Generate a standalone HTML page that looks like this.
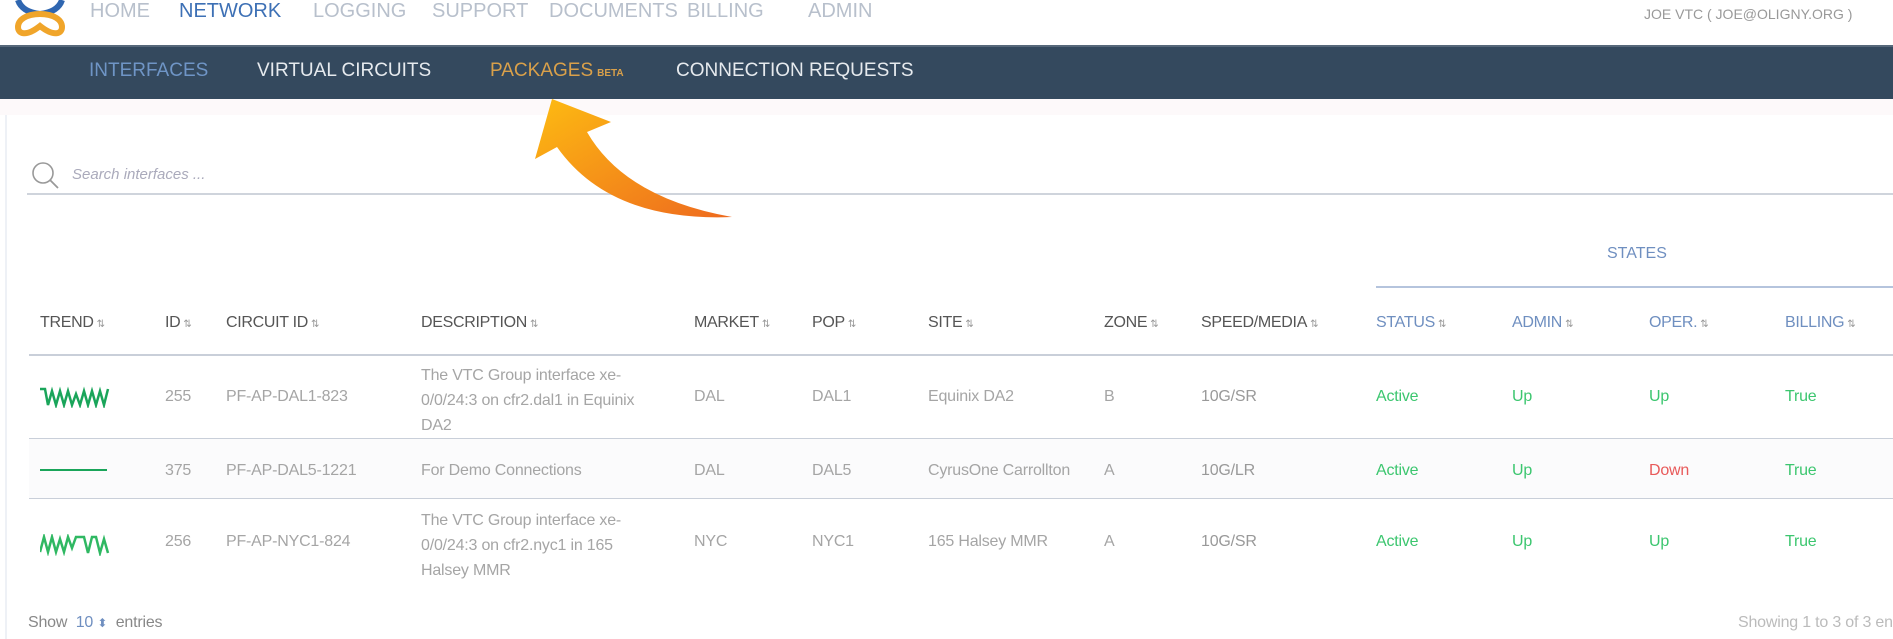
<!DOCTYPE html>
<html><head><meta charset="utf-8"><style>
*{margin:0;padding:0;box-sizing:border-box}
body{width:1893px;height:639px;overflow:hidden;background:#fff;font-family:"Liberation Sans",sans-serif;position:relative}
.a{position:absolute;white-space:nowrap}
.top{font-size:20px;color:#b8c0cc;top:0px}
.bar{position:absolute;left:0;top:45px;width:1893px;height:54px;background:#34495e;border-top:2px solid #56687a}
.sub{font-size:19px;top:60px;color:#e6eaee}
.h{font-size:16px;color:#555;top:314px;letter-spacing:-0.3px}
.h i{font-style:normal;font-size:10px;color:#999;margin-left:3px}
.hb{color:#6f8fc0}
.c{font-size:16px;color:#a5a5a5;letter-spacing:-0.2px}
.g{color:#3cc66f}
.line{position:absolute;left:29px;right:0;height:2px;background:#c9cfd9}
</style></head><body>
<svg class="a" style="left:12px;top:0" width="56" height="40" viewBox="0 0 56 40">
<path d="M6 0 Q10 12 28 14 Q46 12 50 0" stroke="#2f66b0" stroke-width="6" fill="none"/>
<path d="M28 14 C14 14 6 20 6 27 C6 34 14 37 28 26 C42 37 50 34 50 27 C50 20 42 14 28 14" stroke="#f0a52a" stroke-width="6" fill="none"/>
</svg>
<div class="a top" style="left:90px">HOME</div>
<div class="a top" style="left:179px;color:#3d70b5">NETWORK</div>
<div class="a top" style="left:313px">LOGGING</div>
<div class="a top" style="left:432px">SUPPORT</div>
<div class="a top" style="left:549px">DOCUMENTS</div>
<div class="a top" style="left:687px">BILLING</div>
<div class="a top" style="left:808px">ADMIN</div>
<div class="a" style="left:1644px;top:6px;font-size:14px;color:#999">JOE VTC ( JOE@OLIGNY.ORG )</div>
<div class="bar"></div>
<div class="a sub" style="left:89px;color:#6f95c6">INTERFACES</div>
<div class="a sub" style="left:257px">VIRTUAL CIRCUITS</div>
<div class="a sub" style="left:490px;color:#d9a04a">PACKAGES<span style="font-size:10px;font-weight:bold;margin-left:4px">BETA</span></div>
<div class="a sub" style="left:676px">CONNECTION REQUESTS</div>
<div class="a" style="left:0;top:99px;width:1893px;height:16px;background:#fdf9fa"></div>
<div class="a" style="left:5px;top:115px;width:2px;height:524px;background:#eef1f6"></div>
<svg class="a" style="left:31px;top:161px" width="30" height="30"><circle cx="12" cy="12" r="10" stroke="#999" stroke-width="1.6" fill="none"/><line x1="19" y1="19" x2="27" y2="27" stroke="#999" stroke-width="1.8"/></svg>
<div class="a" style="left:72px;top:166px;font-size:15px;font-style:italic;color:#aab">Search interfaces ...</div>
<div class="a" style="left:27px;top:193px;right:0;height:2px;background:#cfd4dc"></div>
<div class="a" style="left:1607px;top:245px;font-size:16px;color:#6f8fc0">STATES</div>
<div class="a" style="left:1376px;top:286px;right:0;height:2px;background:#b5c4dd"></div>
<div class="a h" style="left:40px">TREND<i>⇅</i></div>
<div class="a h" style="left:165px">ID<i>⇅</i></div>
<div class="a h" style="left:226px">CIRCUIT ID<i>⇅</i></div>
<div class="a h" style="left:421px">DESCRIPTION<i>⇅</i></div>
<div class="a h" style="left:694px">MARKET<i>⇅</i></div>
<div class="a h" style="left:812px">POP<i>⇅</i></div>
<div class="a h" style="left:928px">SITE<i>⇅</i></div>
<div class="a h" style="left:1104px">ZONE<i>⇅</i></div>
<div class="a h" style="left:1201px">SPEED/MEDIA<i>⇅</i></div>
<div class="a h hb" style="left:1376px">STATUS<i>⇅</i></div>
<div class="a h hb" style="left:1512px">ADMIN<i>⇅</i></div>
<div class="a h hb" style="left:1649px">OPER.<i>⇅</i></div>
<div class="a h hb" style="left:1785px">BILLING<i>⇅</i></div>
<div class="line" style="top:354px"></div>
<div class="line" style="top:438px;height:1px"></div>
<div class="a" style="left:29px;top:439px;right:0;height:59px;background:#fbfbfc"></div>
<div class="line" style="top:498px;height:1px"></div>
<svg class="a" style="left:40px;top:386px" width="70" height="22"><polyline points="0,3 5,3 8,19 12,5 16,19 20,5 24,19 28,5 32,19 36,8 40,19 44,5 48,19 52,5 56,19 60,5 64,19 68,3" stroke="#1aa55a" stroke-width="2.5" fill="none"/></svg>
<div class="a" style="left:40px;top:469px;width:67px;height:2px;background:#1aa55a"></div>
<svg class="a" style="left:40px;top:534px" width="70" height="22"><polyline points="0,18 4,3 8,18 12,3 16,18 20,5 24,18 28,3 32,14 36,3 44,3 48,19 52,3 56,3 60,19 64,5 68,19" stroke="#2fb862" stroke-width="2.5" fill="none"/></svg>
<div class="a c" style="left:165px;top:388px">255</div>
<div class="a c" style="left:226px;top:388px">PF-AP-DAL1-823</div>
<div class="a c" style="left:421px;top:363px;line-height:25px">The VTC Group interface xe-<br>0/0/24:3 on cfr2.dal1 in Equinix<br>DA2</div>
<div class="a c" style="left:694px;top:388px">DAL</div>
<div class="a c" style="left:812px;top:388px">DAL1</div>
<div class="a c" style="left:928px;top:388px">Equinix DA2</div>
<div class="a c" style="left:1104px;top:388px">B</div>
<div class="a c" style="left:1201px;top:388px;color:#999">10G/SR</div>
<div class="a c g" style="left:1376px;top:388px">Active</div>
<div class="a c g" style="left:1512px;top:388px">Up</div>
<div class="a c g" style="left:1649px;top:388px">Up</div>
<div class="a c g" style="left:1785px;top:388px">True</div>
<div class="a c" style="left:165px;top:462px">375</div>
<div class="a c" style="left:226px;top:462px">PF-AP-DAL5-1221</div>
<div class="a c" style="left:421px;top:462px">For Demo Connections</div>
<div class="a c" style="left:694px;top:462px">DAL</div>
<div class="a c" style="left:812px;top:462px">DAL5</div>
<div class="a c" style="left:928px;top:462px">CyrusOne Carrollton</div>
<div class="a c" style="left:1104px;top:462px">A</div>
<div class="a c" style="left:1201px;top:462px;color:#999">10G/LR</div>
<div class="a c g" style="left:1376px;top:462px">Active</div>
<div class="a c g" style="left:1512px;top:462px">Up</div>
<div class="a c" style="left:1649px;top:462px;color:#e85a5a">Down</div>
<div class="a c g" style="left:1785px;top:462px">True</div>
<div class="a c" style="left:165px;top:533px">256</div>
<div class="a c" style="left:226px;top:533px">PF-AP-NYC1-824</div>
<div class="a c" style="left:421px;top:508px;line-height:25px">The VTC Group interface xe-<br>0/0/24:3 on cfr2.nyc1 in 165<br>Halsey MMR</div>
<div class="a c" style="left:694px;top:533px">NYC</div>
<div class="a c" style="left:812px;top:533px">NYC1</div>
<div class="a c" style="left:928px;top:533px">165 Halsey MMR</div>
<div class="a c" style="left:1104px;top:533px">A</div>
<div class="a c" style="left:1201px;top:533px;color:#999">10G/SR</div>
<div class="a c g" style="left:1376px;top:533px">Active</div>
<div class="a c g" style="left:1512px;top:533px">Up</div>
<div class="a c g" style="left:1649px;top:533px">Up</div>
<div class="a c g" style="left:1785px;top:533px">True</div>
<div class="a c" style="left:28px;top:614px;color:#888">Show &nbsp;<span style="color:#6f8fc0">10</span> <span style="color:#6f8fc0;font-size:12px">⬍</span> &nbsp;entries</div>
<div class="a c" style="left:1738px;top:614px;color:#bbb">Showing 1 to 3 of 3 entries</div>
<svg class="a" style="left:0;top:0" width="1893" height="639">
<defs><linearGradient id="gr" x1="0" y1="0" x2="1" y2="1"><stop offset="0" stop-color="#fdbb12"/><stop offset="1" stop-color="#ee6a1e"/></linearGradient></defs>
<path d="M552,99 L611,122 L587,132 Q625,198 732,217 Q610,222 557,147 L535,159 Z" fill="url(#gr)"/>
</svg>
</body></html>
